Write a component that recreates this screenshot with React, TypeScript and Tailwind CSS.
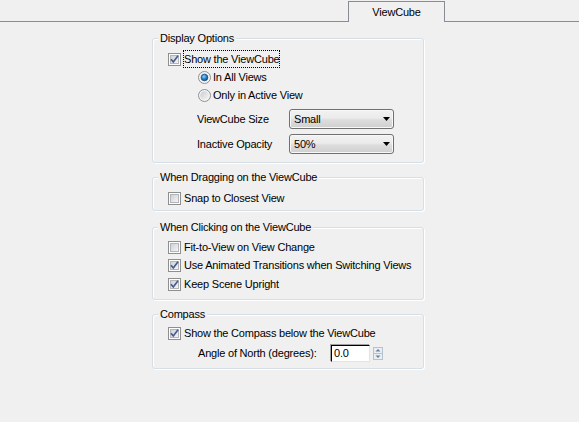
import React from 'react'

function CheckBox({ checked = false }: { checked?: boolean }) {
  return (
    <svg width="13" height="13" viewBox="0 0 13 13" className="shrink-0">
      <defs>
        <linearGradient id="cbFill" x1="0" y1="0" x2="1" y2="1">
          <stop offset="0" stopColor="#cbcfd5" />
          <stop offset="1" stopColor="#f7f7f7" />
        </linearGradient>
      </defs>
      <rect x="0.5" y="0.5" width="12" height="12" fill="#fdfdfd" stroke="#8e8f8f" />
      <rect x="2.5" y="2.5" width="8" height="8" fill="url(#cbFill)" stroke="#b2b6bb" />
      {checked && (
        <path d="M3 6.2 L5.3 9 L10 2.8" fill="none" stroke="#4a5a8f" strokeWidth="1.7" />
      )}
    </svg>
  )
}

function Radio({ checked = false }: { checked?: boolean }) {
  return (
    <svg width="13" height="13" viewBox="0 0 13 13" className="shrink-0">
      <defs>
        <linearGradient id="rbFill" x1="0" y1="0" x2="1" y2="1">
          <stop offset="0" stopColor="#c8ccd2" />
          <stop offset="1" stopColor="#f6f6f6" />
        </linearGradient>
        <radialGradient id="rbDot" cx="0.4" cy="0.35" r="0.7">
          <stop offset="0" stopColor="#8fd3fa" />
          <stop offset="0.5" stopColor="#2a8ad4" />
          <stop offset="1" stopColor="#0d3f74" />
        </radialGradient>
      </defs>
      <circle cx="6.5" cy="6.5" r="6" fill="#f4f4f4" stroke="#8e8f8f" />
      <circle cx="6.5" cy="6.5" r="4.3" fill="url(#rbFill)" />
      {checked && <circle cx="6.5" cy="6.5" r="3.3" fill="url(#rbDot)" stroke="#17416d" strokeWidth="0.7" />}
    </svg>
  )
}

function CheckRow({ label, checked, focused, className = '' }: { label: string; checked?: boolean; focused?: boolean; className?: string }) {
  return (
    <div className={`flex h-[16px] items-center gap-[3px] pl-[15px] ${className}`}>
      <CheckBox checked={checked} />
      <span className={focused ? 'outline-1 outline-dotted outline-black' : ''}>{label}</span>
    </div>
  )
}

function RadioRow({ label, checked, className = '' }: { label: string; checked?: boolean; className?: string }) {
  return (
    <div className={`flex h-[16px] items-center gap-[2px] pl-[45px] ${className}`}>
      <Radio checked={checked} />
      <span>{label}</span>
    </div>
  )
}

function Combo({ value }: { value: string }) {
  return (
    <div className="flex h-[20px] w-[105px] items-center justify-between rounded-[3px] border border-[#707070] bg-[linear-gradient(#f2f2f2_0%,#ebebeb_45%,#dddddd_55%,#cfcfcf_100%)] pr-[3px] pl-[4px] shadow-[inset_0_0_0_1px_#f8f8f8]">
      <span>{value}</span>
      <svg width="7" height="4" viewBox="0 0 7 4">
        <path d="M0 0 H7 L3.5 4 Z" fill="#000" />
      </svg>
    </div>
  )
}

function Group({ title, className = '', children }: { title: string; className?: string; children: React.ReactNode }) {
  return (
    <fieldset className={`rounded-[3px] border border-[#d5dfe5] shadow-[inset_1px_1px_0_#fff,1px_1px_0_#fff] ${className}`}>
      <legend className="ml-[5px] bg-[#f0f0f0] px-[2px] leading-[13px]">{title}</legend>
      {children}
    </fieldset>
  )
}

export default function App() {
  return (
    <div className="h-screen w-full bg-[#f0f0f0] font-['Liberation_Sans',Arial,sans-serif] text-[11px] leading-[16px] tracking-[-0.2px] text-black">
      {/* Tab strip */}
      <div className="flex h-[22px] items-end">
        <div className="h-full w-[348px] border-b border-[#898c95]" />
        <div className="flex h-[21px] w-[97px] items-center justify-center border-x border-t border-[#898c95] bg-[#f0f0f0] pb-[1px]">
          ViewCube
        </div>
        <div className="h-full flex-1 border-b border-[#898c95]" />
      </div>

      <div className="ml-[152px] w-[272px]">
        <Group title="Display Options" className="mt-[10px] pb-[8px]">
          <CheckRow label="Show the ViewCube" checked focused className="mt-[6px]" />
          <RadioRow label="In All Views" checked className="mt-[2px]" />
          <RadioRow label="Only in Active View" className="mt-[2px]" />
          <div className="mt-[6px] flex items-center pl-[44px]">
            <span className="w-[92px]">ViewCube Size</span>
            <Combo value="Small" />
          </div>
          <div className="mt-[5px] flex items-center pl-[44px]">
            <span className="w-[92px]">Inactive Opacity</span>
            <Combo value="50%" />
          </div>
        </Group>

        <Group title="When Dragging on the ViewCube" className="mt-[8px] pb-[4px]">
          <CheckRow label="Snap to Closest View" className="mt-[6px]" />
        </Group>

        <Group title="When Clicking on the ViewCube" className="mt-[10px] pb-[7px]">
          <CheckRow label="Fit-to-View on View Change" className="mt-[5px]" />
          <CheckRow label="Use Animated Transitions when Switching Views" checked className="mt-[2px]" />
          <CheckRow label="Keep Scene Upright" checked className="mt-[3px]" />
        </Group>

        <Group title="Compass" className="mt-[8px] pb-[6px]">
          <CheckRow label="Show the Compass below the ViewCube" checked className="mt-[4px]" />
          <div className="mt-[3px] flex h-[18px] items-center pl-[45px]">
            <span className="w-[133px]">Angle of North (degrees):</span>
            <div className="flex h-[17px] w-[39px] items-center border-t border-l border-black border-r-[#e3e3e3] border-b-[#e3e3e3] border-r border-b bg-white pl-[2px] shadow-[-1px_-1px_0_#a0a0a0]">
              0.0
            </div>
            <svg width="10" height="13" viewBox="0 0 10 13" className="ml-[3px]">
              <rect x="0.5" y="0.5" width="9" height="12" fill="#e9eef3" stroke="#b6c2d0" />
              <line x1="1" y1="6.5" x2="9" y2="6.5" stroke="#b6c2d0" />
              <path d="M2.5 4.5 L5 2 L7.5 4.5 Z" fill="#6b7fa0" />
              <path d="M2.5 8.5 L5 11 L7.5 8.5 Z" fill="#6b7fa0" />
            </svg>
          </div>
        </Group>
      </div>
    </div>
  )
}
